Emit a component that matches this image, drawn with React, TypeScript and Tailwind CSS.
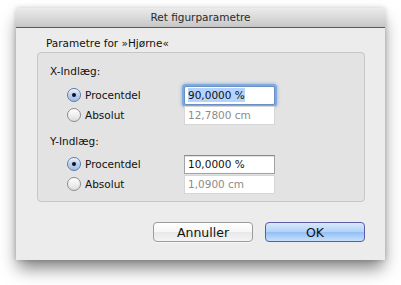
import React from "react";

function Radio({ checked }: { checked: boolean }) {
  return checked ? (
    <div className="w-[14px] h-[14px] rounded-full border border-[#5d78a6] bg-[linear-gradient(to_bottom,#e3edf9_0%,#b9d0ee_50%,#9fbfe9_100%)] shadow-[inset_0_1px_1px_rgba(255,255,255,0.8)] flex items-center justify-center shrink-0">
      <div className="w-[4px] h-[4px] rounded-full bg-[#111]" />
    </div>
  ) : (
    <div className="w-[14px] h-[14px] rounded-full border border-[#8c8c8c] bg-[linear-gradient(to_bottom,#ffffff_0%,#f0f0f0_50%,#dcdcdc_100%)] shrink-0" />
  );
}

function Field({ value, disabled, focused }: { value: string; disabled?: boolean; focused?: boolean }) {
  if (focused) {
    return (
      <div className="w-[91px] h-[19px] bg-white border border-[#6b8fc4] rounded-[2px] shadow-[0_0_0_2px_#7ea9dd,0_0_3px_3px_rgba(100,150,215,0.45)] flex items-center pl-[3px]">
        <span className="bg-[#b4d4fd] text-[#111] leading-[14px]">{value}</span>
      </div>
    );
  }
  return (
    <div
      className={
        disabled
          ? "w-[91px] h-[19px] bg-white border border-[#d6d6d6] flex items-center pl-[3px] text-[#8c8c8c]"
          : "w-[91px] h-[19px] bg-white border border-[#a2a2a2] border-t-[#8a8a8a] flex items-center pl-[3px] text-[#111] shadow-[inset_0_1px_0_#e2e2e2]"
      }
    >
      {value}
    </div>
  );
}

function Row({ label, checked, value, disabled, focused }: { label: string; checked: boolean; value: string; disabled?: boolean; focused?: boolean }) {
  return (
    <div className="h-[20px] flex items-center">
      <Radio checked={checked} />
      <div className="w-[103px] pl-[4px] text-[#111]">{label}</div>
      <Field value={value} disabled={disabled} focused={focused} />
    </div>
  );
}

export default function App() {
  return (
    <div className="w-[401px] h-[285px] bg-white pt-[8px] pl-[16px] overflow-hidden font-['DejaVu_Sans',sans-serif] text-[10.5px] leading-[13px]">
      <div className="w-[369px] h-[252px] bg-[#ececec] flex flex-col shadow-[0_10px_16px_-2px_rgba(0,0,0,0.5),0_0_5px_rgba(0,0,0,0.18)]">
        <div className="h-[20px] shrink-0 bg-[linear-gradient(to_bottom,#ebebeb_0%,#d6d6d6_60%,#c6c6c6_100%)] border-b border-[#5a5a5a] flex items-center justify-center text-[#2a2a2a]">
          Ret figurparametre
        </div>
        <div className="flex flex-col pt-[9px] pb-[18px]">
          <div className="h-[13px] pl-[30px] text-[#111] mb-[2px]">Parametre for »Hjørne«</div>
          <div className="ml-[21px] w-[328px] h-[150px] rounded-[4px] border border-[#c6c6c6] bg-[#e3e3e3] flex flex-col pt-[12px] pl-[29px]">
            <div className="h-[13px] -ml-[17px] text-[#111]">X-Indlæg:</div>
            <div className="mt-[7px] flex flex-col">
              <Row label="Procentdel" checked value="90,0000 %" focused />
              <Row label="Absolut" checked={false} value="12,7800 cm" disabled />
            </div>
            <div className="h-[13px] -ml-[17px] mt-[10px] text-[#111]">Y-Indlæg:</div>
            <div className="mt-[6px] flex flex-col">
              <Row label="Procentdel" checked value="10,0000 %" />
              <Row label="Absolut" checked={false} value="1,0900 cm" disabled />
            </div>
          </div>
          <div className="mt-[20px] flex justify-end gap-[12px] pr-[20px]">
            <div className="w-[100px] h-[20px] rounded-[4px] border border-[#9c9c9c] bg-[linear-gradient(to_bottom,#ffffff_0%,#f6f6f6_50%,#e8e8e8_51%,#f4f4f4_100%)] shadow-[0_1px_0_rgba(255,255,255,0.6)] flex items-center justify-center text-[12.5px] text-[#111]">
              Annuller
            </div>
            <div className="w-[100px] h-[20px] rounded-[4px] border border-[#5a5ca6] bg-[linear-gradient(to_bottom,#d8e8fc_0%,#b3d2f8_48%,#93c0f4_52%,#c6e0fd_100%)] flex items-center justify-center text-[12.5px] text-[#111]">
              OK
            </div>
          </div>
        </div>
      </div>
    </div>
  );
}
